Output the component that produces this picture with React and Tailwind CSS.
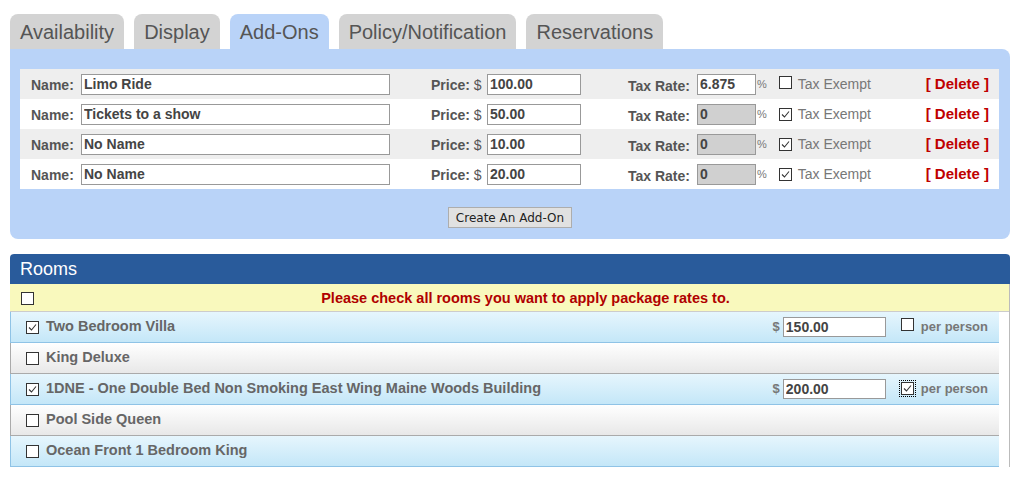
import { useState } from 'react'

const tabs = ['Availability', 'Display', 'Add-Ons', 'Policy/Notification', 'Reservations']

const addOns = [
  { name: 'Limo Ride', price: '100.00', tax: '6.875', exempt: false },
  { name: 'Tickets to a show', price: '50.00', tax: '0', exempt: true },
  { name: 'No Name', price: '10.00', tax: '0', exempt: true },
  { name: 'No Name', price: '20.00', tax: '0', exempt: true },
]

const rooms = [
  { name: 'Two Bedroom Villa', checked: true, price: '150.00', perPerson: false },
  { name: 'King Deluxe', checked: false },
  { name: '1DNE - One Double Bed Non Smoking East Wing Maine Woods Building', checked: true, price: '200.00', perPerson: true, focus: true },
  { name: 'Pool Side Queen', checked: false },
  { name: 'Ocean Front 1 Bedroom King', checked: false },
]

function Box({ checked, focus }) {
  return (
    <span className={`inline-flex h-[13px] w-[13px] shrink-0 items-center justify-center border border-[#333] bg-white ${focus ? 'outline-1 outline-dotted outline-offset-1 outline-black' : ''}`}>
      {checked && (
        <svg width="9" height="9" viewBox="0 0 9 9" fill="none">
          <path d="M1 4.5 L3.5 7 L8 1.5" stroke="#333" strokeWidth="1.1" />
        </svg>
      )}
    </span>
  )
}

export default function App() {
  const [active] = useState('Add-Ons')

  return (
    <div className="h-[484px] w-[1021px] overflow-hidden bg-white px-[10px] pt-[14px] font-['Liberation_Sans',Arial,sans-serif]">
      <div className="flex gap-[10px]">
        {tabs.map((t) => (
          <div
            key={t}
            className={`flex h-[35px] items-center rounded-t-[8px] px-[10px] text-[20px] text-[#555] ${t === active ? 'bg-[#b9d3f8]' : 'bg-[#d3d3d3]'}`}
          >
            {t}
          </div>
        ))}
      </div>

      <div className="w-[1000px] rounded-b-[8px] rounded-tr-[8px] bg-[#b9d3f8] px-[10px] pb-[11px] pt-[20px]">
        <div className="w-[979px]">
          {addOns.map((a, i) => (
            <div
              key={i}
              className={`flex h-[30px] items-center pl-[11px] pr-[10px] text-[14px] ${i % 2 === 0 ? 'bg-[#eeeeee]' : 'bg-white'}`}
            >
              <span className="mt-[2px] w-[50px] font-bold text-[#555]">Name:</span>
              <input
                readOnly
                value={a.name}
                className="h-[21px] w-[309px] border border-[#999] bg-white px-[2px] text-[14px] font-bold text-[#444] outline-none"
              />
              <span className="ml-[41px] mt-[2px] w-[56px] text-[#555]">
                <b>Price:</b> $
              </span>
              <input
                readOnly
                value={a.price}
                className="h-[21px] w-[94px] border border-[#999] bg-white px-[2px] text-[14px] font-bold text-[#444] outline-none"
              />
              <span className="ml-[47px] mt-[4px] w-[69px] font-bold text-[#555]">Tax Rate:</span>
              <input
                readOnly
                value={a.tax}
                className={`h-[21px] w-[59px] border border-[#999] px-[2px] text-[14px] font-bold text-[#444] outline-none ${a.exempt ? 'bg-[#d0d0d0]' : 'bg-white'}`}
              />
              <span className="ml-[1px] text-[11px] text-[#777]">%</span>
              <span className="ml-[12px]"><Box checked={a.exempt} /></span>
              <span className="ml-[6px] text-[14px] text-[#777]">Tax Exempt</span>
              <span className="ml-auto text-[15px] font-bold text-[#c00000]">[ Delete ]</span>
            </div>
          ))}
        </div>
        <div className="mt-[18px] flex justify-center">
          <button className="h-[21px] border border-[#adadad] bg-[#e1e1e1] px-[7px] font-['DejaVu_Sans',sans-serif] text-[12px] text-[#222]">
            Create An Add-On
          </button>
        </div>
      </div>

      <div className="mt-[15px] w-[1000px]">
        <div className="flex h-[30px] items-center rounded-t-[4px] bg-[#295b9b] px-[10px] text-[18px] text-white">
          Rooms
        </div>
        <div className="border-r border-[#bbb]">
          <div className="relative flex h-[28px] items-center justify-center border-b border-[#ccc] bg-[#f9f9bd] text-[14.5px] font-bold text-[#b00000]">
            <span className="absolute left-[11px] top-[6px]"><Box /></span>
            <span className="mt-[3px] pl-[32px]">Please check all rooms you want to apply package rates to.</span>
          </div>
          {rooms.map((r, i) => (
            <div
              key={i}
              className={`flex h-[31px] w-[989px] items-center border-b border-l pl-[15px] pr-[11px] text-[14.5px] font-bold text-[#666] ${i % 2 === 0 ? 'border-[#8fc3e6] bg-gradient-to-b from-[#e6f6fd] to-[#c4e7f8]' : 'border-[#aaa] bg-gradient-to-b from-white to-[#e8e8e8]'}`}
            >
              <Box checked={r.checked} />
              <span className="ml-[7px]">{r.name}</span>
              {r.price && (
                <div className="ml-auto flex items-center">
                  <span className="mr-[3px] text-[13px] text-[#777]">$</span>
                  <input
                    readOnly
                    value={r.price}
                    className="h-[20px] w-[103px] border border-[#999] bg-white px-[2px] text-[14px] font-bold text-[#444] outline-none"
                  />
                  <span className="ml-[15px]"><Box checked={r.perPerson} focus={r.focus} /></span>
                  <span className="ml-[7px] text-[13px] text-[#777]">per person</span>
                </div>
              )}
            </div>
          ))}
        </div>
      </div>
    </div>
  )
}
